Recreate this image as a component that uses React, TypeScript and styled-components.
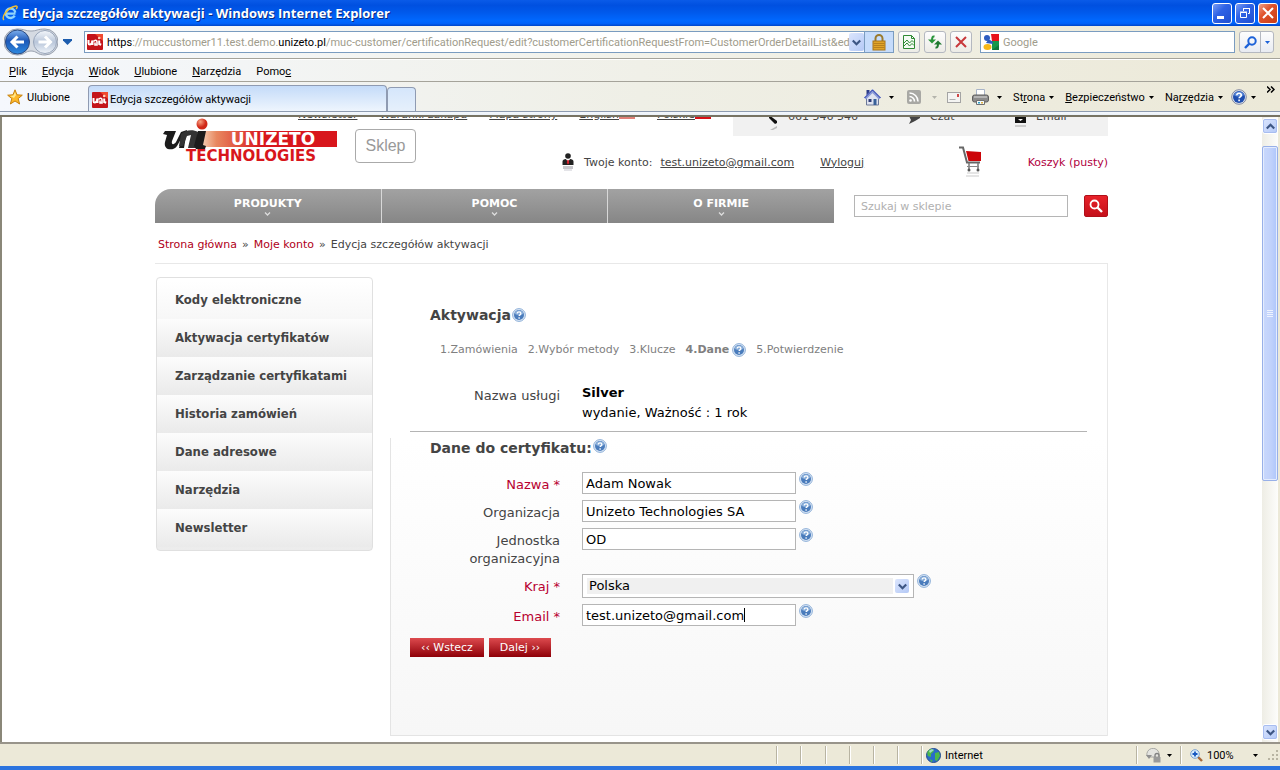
import React from "react";
import styled, { createGlobalStyle, css } from "styled-components";

const ui = `Roboto, "Noto Sans", sans-serif`;
const web = `"DejaVu Sans", Verdana, sans-serif`;

const Global = createGlobalStyle`
  *, *::before, *::after { box-sizing: border-box; }
  body { margin: 0; overflow: hidden; background: #fff; }
  button, input, select { font: inherit; margin: 0; padding: 0; border: 0; background: none; color: inherit; }
  button { cursor: pointer; }
  svg { display: block; flex: none; }
`;

const Frame = styled.div`
  display: flex;
  flex-direction: column;
  height: 100vh;
  font: 11px/14px ${ui};
  color: #000;
  background: #ece9d8;
  border-bottom: 4px solid #2b74df;
`;

/* ---------- title bar ---------- */
const TitleBar = styled.header`
  flex: none;
  display: flex;
  align-items: center;
  height: 26px;
  padding: 0 2px;
  background: linear-gradient(#0a5be8 0, #0050e0 20%, #0058ea 45%, #0068ff 80%, #0062fa 90%, #0046c8 100%);
`;
const Title = styled.h1`
  flex: 1;
  margin: 0 0 0 4px;
  font: bold 13px/18px "Open Sans", sans-serif;
  color: #fff;
  text-shadow: 1px 1px 0 #0a2a80;
`;
const WindowButtons = styled.div`
  display: flex;
  gap: 3px;
`;
const WindowButton = styled.button<{ $close?: boolean }>`
  display: grid;
  place-items: center;
  width: 20px;
  height: 21px;
  border: 1px solid #fff;
  border-radius: 3px;
  background: ${(p) =>
    p.$close
      ? "linear-gradient(135deg, #f0a088, #e0532c 40%, #c83c14)"
      : "linear-gradient(135deg, #7a9cf4, #2f63e6 40%, #1f4fd0)"};
`;

/* ---------- toolbars ---------- */
const AddressBar = styled.div`
  flex: none;
  display: flex;
  align-items: center;
  height: 33px;
  padding: 0 6px 0 4px;
  background: linear-gradient(90deg, #f5f8fd, #f2f2ea 50%, #ece9d8);
  border-bottom: 1px solid #a5a39a;
`;
const NavRound = styled.button`
  display: flex;
`;
const HistoryButton = styled.button`
  margin: 0 12px 0 5px;
`;
const UrlBox = styled.div`
  flex: 1;
  min-width: 0;
  display: flex;
  align-items: center;
  height: 22px;
  padding-left: 2px;
  background: #fff;
  border: 1px solid #7a9cc0;
`;
const Url = styled.div`
  flex: 1;
  min-width: 0;
  margin-left: 4px;
  padding-top: 2px;
  overflow: hidden;
  white-space: nowrap;
  color: #a09c8c;
  b { font-weight: normal; color: #000; }
`;
const ComboArrow = styled.span`
  display: grid;
  place-items: center;
  width: 15px;
  height: 18px;
  border-radius: 2px;
  background: linear-gradient(135deg, #dbe5fd, #b4c9f6);
`;
const LockCell = styled.div`
  display: grid;
  place-items: center;
  width: 30px;
  height: 22px;
  margin-left: -1px;
  background: #c6dcfb;
  border: 1px solid #7a9cc0;
`;
const ToolButton = styled.button`
  display: grid;
  place-items: center;
  width: 22px;
  height: 22px;
  margin-left: 4px;
  border: 1px solid #b4b8c0;
  border-radius: 3px;
  background: linear-gradient(#fdfdfd, #ecebe6);
`;
const SearchBox = styled.label`
  display: flex;
  align-items: center;
  gap: 4px;
  width: 255px;
  height: 22px;
  margin: 0 4px 0 8px;
  padding-left: 2px;
  background: #fff;
  border: 1px solid #7a9cc0;
  input {
    flex: 1;
    min-width: 0;
    padding-top: 2px;
    outline: 0;
  }
  input::placeholder { color: #a09c8c; opacity: 1; }
`;
const SplitButton = styled.div`
  display: flex;
  height: 22px;
  border: 1px solid #b4b8c0;
  border-radius: 3px;
  background: linear-gradient(#fdfdfd, #e8ebf2);
  button { display: grid; place-items: center; width: 20px; }
  button + button { width: 13px; border-left: 1px solid #b4b8c0; }
`;
const MenuBar = styled.nav`
  flex: none;
  display: flex;
  align-items: center;
  gap: 15px;
  height: 23px;
  padding: 2px 0 0 9px;
  background: linear-gradient(90deg, #f5f8fd, #f0f0e8 50%, #ece9d8);
  border-bottom: 1px solid #a5a39a;
  border-top: 1px solid #fff;
`;
const TabBar = styled.div`
  flex: none;
  display: flex;
  align-items: flex-end;
  height: 30px;
  padding: 0 9px 0 7px;
  background: linear-gradient(90deg, #f5f8fd, #efefe6 50%, #ece9d8);
  border-bottom: 1px solid #8d9bb0;
`;
const Favorites = styled.button`
  display: flex;
  align-items: center;
  gap: 4px;
  width: 81px;
  height: 28px;
  span { padding-top: 2px; }
`;
const Tab = styled.button<{ $blank?: boolean }>`
  display: flex;
  align-items: center;
  gap: 2px;
  height: 26px;
  padding: 2px 3px 0;
  border: 1px solid #8f9bb2;
  border-bottom: 0;
  border-radius: 4px 4px 0 0;
  white-space: nowrap;
  ${(p) =>
    p.$blank
      ? css`width: 29px; height: 24px; background: linear-gradient(#d5e6fb, #e6f0fb);`
      : css`width: 299px; background: linear-gradient(#c4dbf9, #eef5fd);`}
`;
const Commands = styled.div`
  flex: 1;
  display: flex;
  justify-content: flex-end;
  align-items: center;
  height: 28px;
`;
const Command = styled.button<{ $gap: number }>`
  display: flex;
  align-items: center;
  gap: 4px;
  margin-left: ${(p) => p.$gap}px;
  white-space: nowrap;
  span { padding-top: 2px; }
`;
const Chevrons = styled.span`
  align-self: flex-start;
  width: 8px;
  margin: 4px -4px 0 11px;
`;
const TabEdge = styled.div`
  flex: none;
  height: 5px;
  background: linear-gradient(#f4f8fd, #eaf1f9);
  border-bottom: 2px solid #777363;
`;

/* ---------- viewport ---------- */
const Viewport = styled.div`
  flex: 1;
  min-height: 0;
  display: flex;
  background: #fff;
  border-left: 2px solid #8a8778;
  border-right: 2px solid #ece9d8;
`;
const Page = styled.main`
  flex: 1;
  min-width: 0;
  padding-right: 1px;
  overflow: hidden;
  font: 11px/14px ${web};
  color: #444;
`;
const Container = styled.div`
  max-width: 953px;
  margin: 0 auto;
`;
const ScrollBar = styled.div`
  flex: none;
  display: flex;
  flex-direction: column;
  width: 16px;
  padding: 1px 0 2px;
  background: linear-gradient(90deg, #eeede5, #fdfdfb);
`;
const ScrollButton = styled.button`
  display: grid;
  place-items: center;
  width: 16px;
  height: 16px;
  border: 1px solid #fff;
  outline: 1px solid #a8bdf0;
  outline-offset: -2px;
  border-radius: 3px;
  background: linear-gradient(135deg, #dbe5fd, #b4c9f8);
`;
const Track = styled.div`
  flex: 1;
  display: flex;
  flex-direction: column;
  padding-top: 12px;
`;
const Thumb = styled.div`
  display: grid;
  place-items: center;
  height: 58%;
  border: 1px solid #98b0e8;
  border-radius: 2px;
  background: linear-gradient(90deg, #c9d8fc, #c0d1fb 60%, #aec6fb);
  box-shadow: inset 0 0 0 1px #e4ecfe;
`;

/* ---------- shop header ---------- */
const ShopHeader = styled.div`
  display: grid;
  grid-template:
    "links links contacts" 5px
    "logo . contacts" 14px
    "logo account account" 53px / 403px 175px 1fr;
`;
const TopLinks = styled.nav`
  grid-area: links;
  display: flex;
  align-items: flex-end;
  gap: 22px;
  padding-left: 143px;
  a { display: flex; color: #444; white-space: nowrap; }
`;
const Flag = styled.i<{ $color: string }>`
  width: 16px;
  height: 11px;
  background: ${(p) => p.$color};
`;
const Contacts = styled.div`
  grid-area: contacts;
  display: flex;
  align-items: flex-start;
  background: #f1f1f1;
`;
const Contact = styled.span<{ $width: number }>`
  display: flex;
  gap: 10px;
  width: ${(p) => p.$width}px;
  height: 14px;
  margin-top: -7px;
`;
const Brand = styled.div`
  grid-area: logo;
  display: flex;
  align-items: flex-start;
  padding-left: 9px;
  svg { overflow: visible; }
`;
const ShopBadge = styled.a`
  display: grid;
  place-items: center;
  width: 61px;
  height: 34px;
  margin: 7px 0 0 17px;
  border: 1px solid #aaa;
  border-radius: 4px;
  font: 16px/20px "Liberation Sans", sans-serif;
  color: #999;
  text-decoration: none;
`;
const Account = styled.div`
  grid-area: account;
  display: flex;
  align-items: center;
  white-space: nowrap;
  padding-left: 4px;
`;
const AccountText = styled.div`
  flex: 1;
  display: flex;
  margin-left: 10px;
  a { margin-left: 8px; color: #444; }
  a + a { margin-left: 26px; }
`;
const CartLink = styled.a`
  margin-left: 46px;
  color: #b00040;
  text-decoration: none;
`;
const NavRow = styled.div`
  display: flex;
  align-items: center;
  height: 34px;
`;
const MainNav = styled.nav`
  flex: 1;
  display: flex;
  height: 34px;
  border-radius: 16px 0 0 0;
  overflow: hidden;
  background: linear-gradient(#a2a2a2, #868686);
`;
const NavItem = styled.a`
  flex: 1;
  display: flex;
  flex-direction: column;
  align-items: center;
  padding-top: 8px;
  font-weight: bold;
  color: #fff;
  text-decoration: none;
  & + & { border-left: 1px solid #d8d8d8; }
  svg { margin-top: 1px; }
`;
const ShopSearch = styled.form`
  display: flex;
  gap: 16px;
  margin-left: 20px;
  input {
    width: 214px;
    height: 22px;
    padding: 0 6px;
    border: 1px solid #b5b5b5;
    background: #fff;
    outline: 0;
  }
  input::placeholder { color: #b0b0b0; opacity: 1; }
  button {
    display: grid;
    place-items: center;
    width: 24px;
    height: 22px;
    border: 1px solid #b0101a;
    border-radius: 2px;
    background: linear-gradient(#e8222a, #c4101a);
  }
`;
const Crumbs = styled.nav`
  display: flex;
  gap: 5px;
  height: 40px;
  padding: 15px 0 0 3px;
  a { color: #b00020; text-decoration: none; }
`;

/* ---------- body ---------- */
const Body = styled.div`
  display: flex;
  align-items: flex-start;
  border: solid #e8e8e8;
  border-width: 1px 1px 0 0;
`;
const SideNav = styled.ul`
  width: 217px;
  margin: 13px 17px 0 1px;
  padding: 3px 0;
  list-style: none;
  border: 1px solid #e0e0e0;
  border-radius: 4px;
  background: linear-gradient(#fff 50%, #ececec);
`;
const SideItem = styled.li`
  a {
    display: block;
    padding: 0 18px;
    font: bold 13px/38px "DejaVu Sans Condensed", ${web};
    color: #444;
    text-decoration: none;
    white-space: nowrap;
    background: linear-gradient(#fcfcfc, #eaeaea);
  }
  &:first-child a { background: linear-gradient(#fff, #f7f7f7); }
`;
const Panel = styled.section`
  flex: 1;
  display: flex;
  flex-direction: column;
  min-height: 472px;
  padding: 41px 20px 0 19px;
  border: solid;
  border-width: 0 0 1px 1px;
  border-image: linear-gradient(transparent 37%, #e4e4e4 37%) 1;
  background: linear-gradient(#fff 37%, #f7f7f7);
  font-size: 13px;
  line-height: 18px;
`;
const Heading = styled.h2`
  display: flex;
  gap: 1px;
  margin: 0;
  padding-left: 20px;
  font: bold 14px/20px ${web};
  color: #444;
  svg { margin-top: 3px; }
`;
const SubHeading = styled(Heading).attrs({ as: "h3" })`
  margin: 6px 0 14px;
  svg { margin-top: 1px; }
`;
const Steps = styled.ol`
  display: flex;
  align-items: center;
  gap: 10px;
  margin: 16px 0 0;
  padding: 0 0 0 30px;
  list-style: none;
  font-size: 11px;
  color: #808080;
`;
const Step = styled.li<{ $current?: boolean }>`
  display: flex;
  align-items: center;
  gap: 3px;
  font-weight: ${(p) => (p.$current ? "bold" : "normal")};
`;
const Service = styled.div`
  display: flex;
  gap: 22px;
  height: 49px;
  margin-top: 24px;
  border-bottom: 1px solid #b4b4b4;
  > span { width: 150px; padding-top: 4px; text-align: right; }
`;
const ServiceValue = styled.div`
  line-height: 20px;
  color: #000;
  b { display: block; }
`;
const Fields = styled.form`
  display: flex;
  flex-direction: column;
`;
const Field = styled.div`
  display: flex;
  align-items: flex-start;
  gap: 3px;
  margin-bottom: 6px;
`;
const FieldLabel = styled.label<{ $required?: boolean }>`
  width: 150px;
  margin-right: 19px;
  padding-top: 4px;
  text-align: right;
  color: ${(p) => (p.$required ? "#b80030" : "#444")};
`;
const TextWrap = styled.div`
  position: relative;
`;
const Text = styled.input`
  display: block;
  width: 214px;
  height: 22px;
  padding: 0 3px;
  border: 1px solid #b5b5b5;
  background: #fff;
  color: #000;
  outline: 0;
`;
const Caret = styled.span`
  position: absolute;
  top: 4px;
  left: 162px;
  width: 1px;
  height: 14px;
  background: #000;
`;
const SelectWrap = styled.div`
  display: flex;
  align-items: center;
  width: 332px;
  height: 24px;
  padding: 4px;
  border: 1px solid #b5b5b5;
  background: #fff;
  select {
    flex: 1;
    height: 16px;
    padding-left: 2px;
    appearance: none;
    background: #f0f0f0;
    color: #000;
    line-height: 16px;
    outline: 0;
  }
  span { width: 14px; height: 14px; margin-left: 2px; }
`;
const Actions = styled.div`
  display: flex;
  gap: 5px;
  margin-top: 6px;
`;
const Action = styled.button`
  height: 19px;
  padding: 0 11px;
  font-size: 11px;
  line-height: 19px;
  color: #fff;
  background: linear-gradient(#dd4a4e, #8e0008);
`;

/* ---------- status bar ---------- */
const StatusBar = styled.footer`
  flex: none;
  display: flex;
  justify-content: flex-end;
  align-items: center;
  height: 24px;
  border-top: 2px solid #98948a;
  background: #ece9d8;
`;
const Cell = styled.div<{ $width: number; $menu?: boolean }>`
  display: flex;
  align-items: center;
  gap: 4px;
  width: ${(p) => p.$width}px;
  height: 18px;
  padding: ${(p) => (p.$menu ? "0 8px 0 9px" : "0 0 0 4px")};
  border-left: 1px solid #b8b4a2;
  box-shadow: inset 1px 0 0 #fff;
  span { padding-top: 2px; }
  ${(p) => p.$menu && css`svg:last-child { margin-left: auto; }`}
`;

/* ---------- icons ---------- */
const Down = ({ color = "#000" }: { color?: string }) => (
  <svg width="5" height="3"><path d="M0 0h5L2.500 3z" fill={color} /></svg>
);
const Chevron = ({ up }: { up?: boolean }) => (
  <svg width="9" height="7" viewBox="0 0 9 7" fill="none" stroke="#3d5684" strokeWidth="2.200">
    <path d={up ? "M.8 5.500 4.500 1.800l3.700 3.700" : "M.8 1.500l3.700 3.700 3.700-3.700"} />
  </svg>
);
const Help = () => (
  <svg width="14" height="14" viewBox="0 0 14 14" role="img" aria-label="Pomoc">
    <circle cx="7" cy="7" r="6.400" fill="#dbe7f5" stroke="#8fb0d8" />
    <circle cx="7" cy="7" r="5" fill="#4a7cbc" />
    <path d="M2.600 5.500a4.600 4.600 0 0 1 8.800 0c-2 2-6.800 2-8.800 0" fill="#86acd9" />
    <path d="M5.200 5.600c0-2.200 3.700-2.200 3.700 0 0 1.300-1.800 1.200-1.800 2.500M7.100 9.300v1.400" fill="none" stroke="#fff" strokeWidth="1.300" />
  </svg>
);
const CommandHelp = () => (
  <svg width="16" height="16" viewBox="0 0 16 16">
    <circle cx="8" cy="8" r="7.300" fill="#e4e8f0" stroke="#8088a0" />
    <circle cx="8" cy="8" r="6" fill="#1f4fb0" />
    <path d="M3 6a5.500 5.500 0 0 1 10 0c-2 2-8 2-10 0" fill="#5c8ad8" />
    <path d="M5.800 6.300c0-2.800 4.500-2.800 4.500 0 0 1.500-2.200 1.500-2.200 3M8.100 10.600v1.700" fill="none" stroke="#fff" strokeWidth="1.600" />
  </svg>
);
const SiteIcon = () => (
  <svg width="16" height="16" viewBox="0 0 16 16">
    <rect width="16" height="16" rx="1" fill="#c4141a" />
    <path d="M8 0h8v7z" fill="#f04a30" />
    <path d="M1.500 6v3c0 2 2.500 2 3.200 0l.8-2.500V11" fill="none" stroke="#fff" strokeWidth="2" />
    <path d="M6.500 7.500C8 5.500 10 6 10 8v3H8V8.500" fill="none" stroke="#fff" strokeWidth="1.600" />
    <path d="M12.200 6.500V10l2 .8" fill="none" stroke="#fff" strokeWidth="2" />
    <circle cx="12.200" cy="4" r="1.300" fill="#ffd0b8" />
  </svg>
);
const IeIcon = () => (
  <svg width="16" height="16" viewBox="0 0 16 16">
    <path d="M13.500 8.600H4.800M13.300 7.500a4.800 4.800 0 1 0-.6 3.200" fill="none" stroke="#8fd4fb" strokeWidth="2.400" />
    <path d="M2 15C-1 12 6 2 14 1c2 0 1 2 0 3" fill="none" stroke="#f4c030" strokeWidth="1.400" />
  </svg>
);
const BackForward = () => (
  <svg width="54" height="28" viewBox="0 0 54 28">
    <defs>
      <linearGradient id="bk" x2="0" y2="1"><stop stopColor="#7fb0ee" /><stop offset=".45" stopColor="#1d58b8" /><stop offset="1" stopColor="#2e8ae0" /></linearGradient>
      <linearGradient id="fw" x2="0" y2="1"><stop stopColor="#f4f7fb" /><stop offset=".5" stopColor="#b9c6da" /><stop offset="1" stopColor="#eef3f9" /></linearGradient>
    </defs>
    <path d="M13 1c8 0 8 2 14 2s6-2 14-2a13 13 0 0 1 0 26c-8 0-8-4-14-4s-6 4-14 4A13 13 0 0 1 13 1" fill="#d5dae2" stroke="#9aa2b0" />
    <circle cx="13.500" cy="14" r="12" fill="url(#bk)" stroke="#2c4a80" />
    <circle cx="41" cy="14" r="11.500" fill="url(#fw)" stroke="#98a5ba" />
    <path d="M20 14H9M13.500 8.500 8 14l5.500 5.500M34.500 14h11M41 8.500l5.500 5.500-5.500 5.500" fill="none" stroke="#fff" strokeWidth="3" />
  </svg>
);
const Star = () => (
  <svg width="16" height="16" viewBox="0 0 16 16">
    <path d="m8 .8 2 5 5.300.4-4.100 3.400 1.400 5.400L8 12l-4.600 3 1.400-5.400L.7 6.200 6 5.800z" fill="#fdb92c" stroke="#c8820e" />
    <path d="m8 3 1 3-2 3-4-2 3.500-.5z" fill="#ffe890" />
  </svg>
);
const Lock = () => (
  <svg width="14" height="17" viewBox="0 0 14 17">
    <path d="M3.500 8V4.500a3.500 3.500 0 0 1 7 0V8" fill="none" stroke="#9a7a2c" strokeWidth="2" />
    <rect x="1" y="7" width="12" height="9" fill="#e0a428" stroke="#a8741a" />
    <path d="M1.500 9.500h11M1.500 11.500h11M1.500 13.500h11" stroke="#b9801c" />
  </svg>
);
const BrokenPage = () => (
  <svg width="12" height="14" viewBox="0 0 12 14" fill="none" stroke="#2f8a34">
    <path d="M.5.500h8l3 3v10H.5zM8.500.5v3h3" fill="#f4fbf4" />
    <path d="m1 8 3-3 2.500 3L9 5.500l2 2M1 11l3-3 2.500 3L9 8.500l2 2" />
  </svg>
);
const Refresh = () => (
  <svg width="14" height="14" viewBox="0 0 14 14">
    <path d="M6.500 1.500C4.500 1 4 2.500 4 6" fill="none" stroke="#28943a" strokeWidth="2" />
    <path d="M0 4.500h8L4 8.500z" fill="#28943a" />
    <path d="M7.500 12.500C9.500 13 10 11.500 10 8" fill="none" stroke="#1f7a30" strokeWidth="2" />
    <path d="M6 9.500h8l-4-4z" fill="#1f7a30" />
  </svg>
);
const Stop = () => (
  <svg width="12" height="12" viewBox="0 0 12 12" stroke="#c8383c" strokeWidth="2"><path d="m1 1 10 10M11 1 1 11" /></svg>
);
const SearchLogo = () => (
  <svg width="16" height="16" viewBox="0 0 16 16">
    <path d="M8 0h8v7H9z" fill="#e8141c" /><path d="M9 7h7v9H9z" fill="#18984a" />
    <path d="M9 16h7v-5z" fill="#107a3a" />
    <circle cx="4" cy="4" r="3" fill="#2c5cc0" /><path d="M5 6c4 0 5 2 5 4L3 9z" fill="#2c5cc0" />
    <ellipse cx="4.500" cy="13" rx="4" ry="3" fill="#f8b818" />
  </svg>
);
const Magnifier = () => (
  <svg width="13" height="13" viewBox="0 0 13 13" fill="none" stroke="#1d62d8">
    <circle cx="8" cy="5" r="3.700" strokeWidth="2" /><path d="M5.300 7.700 1 12" strokeWidth="2.400" />
  </svg>
);
const Home = () => (
  <svg width="17" height="17" viewBox="0 0 17 17">
    <path d="M2.500 8v8h12V8L8.500 3z" fill="#dfe3f0" stroke="#6c7898" />
    <path d="M2.500 1h3v5h-3z" fill="#2c3c88" />
    <path d="M1 9.500 8.500 2 16 9.500" fill="none" stroke="#8c9cd8" strokeWidth="3" />
    <path d="M.5 9 8.500 1l8 8" fill="none" stroke="#2838a8" />
    <path d="M4.500 10h3v3h-3z" fill="#303e78" /><path d="M9.500 10h3v6h-3z" fill="#386098" />
  </svg>
);
const Feed = () => (
  <svg width="14" height="14" viewBox="0 0 14 14">
    <rect width="14" height="14" rx="2" fill="#a8a8a4" />
    <g fill="none" stroke="#fff" strokeWidth="1.600"><path d="M2.500 6.500a5 5 0 0 1 5 5M2.500 3a8.500 8.500 0 0 1 8.500 8.500" /></g>
    <circle cx="3.500" cy="10.500" r="1.300" fill="#fff" />
  </svg>
);
const Mail = () => (
  <svg width="14" height="11" viewBox="0 0 14 11">
    <rect x=".5" y=".5" width="13" height="10" fill="#f4f4f2" stroke="#a4a4a4" />
    <path d="M10 2h2v3h-2z" fill="#d04848" /><path d="M2.500 7.500h6" stroke="#b0b0b0" />
  </svg>
);
const Printer = () => (
  <svg width="17" height="16" viewBox="0 0 17 16">
    <path d="M4.500.5h8v6h-8z" fill="#fff" stroke="#a8b4c8" />
    <rect x=".5" y="6" width="16" height="7" rx="2" fill="#8c8c8c" stroke="#5e5e5e" /><path d="M2 7h13v2H2z" fill="#b4b4b4" />
    <path d="M4.500 11.500h8v4h-8z" fill="#f4fafc" stroke="#707070" /><path d="M6 13h2v1.500H6z" fill="#30a0c8" /><path d="M9 13h2v1.500H9z" fill="#e0b040" />
  </svg>
);
const Globe = () => (
  <svg width="15" height="15" viewBox="0 0 15 15">
    <circle cx="7.500" cy="7.500" r="7" fill="#2a6cc8" stroke="#234c8c" />
    <path d="M2 3c3-3 5-2 6 0L5 6v3L2 8C1 6 1 4 2 3M9 5l4-1 1 4-3 5-2-1zM4 11l3 2-2 1z" fill="#4cb848" />
    <path d="M3 3c2-2 4-2 5-1L4 5z" fill="#c8ecf8" opacity=".7" />
  </svg>
);
const Protect = () => (
  <svg width="16" height="15" viewBox="0 0 16 15">
    <path d="M1 8A6 6 0 0 1 13 5v4H5z" fill="#e4e4e0" stroke="#a8a8a4" /><path d="M0 7h6L3 11z" fill="#909090" />
    <path d="M9 9V7.500a2 2 0 0 1 4 0V9" fill="none" stroke="#808080" strokeWidth="1.300" /><path d="M7.500 9h7v5.500h-7z" fill="#9a9a9a" />
  </svg>
);
const Zoom = () => (
  <svg width="13" height="13" viewBox="0 0 13 13">
    <path d="m8 8 4 4" stroke="#a86838" strokeWidth="2.400" />
    <circle cx="5" cy="5" r="4.300" fill="#dceefc" stroke="#78a0d0" /><path d="M5 2.500v5M2.500 5h5" stroke="#1858c0" strokeWidth="1.800" />
  </svg>
);
const Grip = () => (
  <svg width="14" height="14" fill="#b8b4a2">
    <path d="M10 2h2v2h-2zM10 6h2v2h-2zM10 10h2v2h-2zM6 6h2v2H6zM6 10h2v2H6zM2 10h2v2H2z" />
  </svg>
);
const Person = () => (
  <svg width="12" height="20" viewBox="0 0 12 20">
    <circle cx="6" cy="3" r="2.800" fill="#222" />
    <path d="M.5 12V8.500C.5 7 2 6.200 4 6l2 3 2-3c2 .2 3.500 1 3.500 2.500V12z" fill="#222" /><path d="m4.500 6 1.500 3 1.500-3z" fill="#fff" /><path d="M5.300 7h1.400l.5 3L6 11.500 4.800 10z" fill="#d8202c" />
    <path d="M1 13h10v3H1z" fill="#c8c8cc" /><path d="M2 16h8v2H2z" fill="#e4e4e8" />
  </svg>
);
const Cart = () => (
  <svg width="23" height="34" viewBox="0 0 23 34">
    <path d="M0 1.500h4l4 15h13" fill="none" stroke="#666" strokeWidth="2" />
    <path d="M7 5 22 6v9H9.500z" fill="#cc0408" />
    <path d="M10 17v6.500M19 17v6.500" stroke="#777" strokeDasharray="3 1" strokeWidth="1.500" /><path d="M8 20.500h12" stroke="#888" />
    <circle cx="10" cy="24" r="1.500" fill="#555" /><circle cx="19" cy="24" r="1.500" fill="#555" />
    <path d="M8 27h12M7 30h13" stroke="#ddd" strokeWidth="1.500" />
  </svg>
);
const LogoText = styled.text<{ $light?: boolean }>`
  font: bold ${(p) => (p.$light ? 17 : 15)}px/1 "DejaVu Sans", sans-serif;
  text-anchor: middle;
  fill: ${(p) => (p.$light ? "#fff" : "#d8161c")};
`;
const Logo = () => (
  <svg width="174" height="40" viewBox="0 1 174 40" role="img" aria-label="Unizeto Technologies">
    <defs>
      <linearGradient id="band"><stop offset="0" stopColor="#f6d8c0" /><stop offset=".12" stopColor="#e88860" /><stop offset=".45" stopColor="#d8161c" /></linearGradient>
      <radialGradient id="ball" cx=".35" cy=".3"><stop stopColor="#f8a080" /><stop offset="1" stopColor="#d02818" /></radialGradient>
    </defs>
    <path d="M40 10h133v16H36z" fill="url(#band)" />
    <path d="M1 10h11L8 20c-1 4 2 4 4 1l5-10 6-2-3 18h-5l2-9-4 7c-3 5-14 5-12-4l2-7-4-1z" fill="#1c1c1c" />
    <path d="M17 13c4-4 12-5 17-2l-2 16h-8l3-13-4 1-4 10h-4z" fill="#333" />
    <path d="M34 10h8l-3 14 3 1-1 3h-9l-2-3z" fill="#1c1c1c" />
    <circle cx="38" cy="3" r="5.500" fill="url(#ball)" />
    <LogoText x="109" y="24" $light>UNIZETO</LogoText>
    <LogoText x="87" y="40">TECHNOLOGIES</LogoText>
  </svg>
);
const PhoneIcon = () => (
  <svg width="45" height="20" viewBox="0 0 45 20" overflow="visible"><path d="m36 5 8 6v2l-2 1-6-6z" fill="#111" /><path d="m37 20 7-4v2l-4 2z" fill="#bbb" /></svg>
);
const ChatIcon = () => (
  <svg width="48" height="20" viewBox="0 0 48 20" overflow="visible"><path d="M36 4h12v4l-5 3-6 3 2-4z" fill="#444" /></svg>
);
const EmailIcon = () => (
  <svg width="50" height="20" viewBox="0 0 50 20" overflow="visible"><path d="M39 5h11v8H39z" fill="#111" /><path d="m42 9 2.500 2L47 9z" fill="#fff" /><path d="M39 15h11v2H39z" fill="#ccc" /></svg>
);

/* ---------- data ---------- */
const menu: [string, string, string][] = [
  ["", "P", "lik"], ["", "E", "dycja"], ["", "W", "idok"], ["", "U", "lubione"], ["", "N", "arzędzia"], ["Pomo", "c", ""],
];
const sideItems = [
  "Kody elektroniczne", "Aktywacja certyfikatów", "Zarządzanie certyfikatami", "Historia zamówień", "Dane adresowe", "Narzędzia", "Newsletter",
];

const TextField = ({ id, label, value, required, caret }: { id: string; label: string; value: string; required?: boolean; caret?: boolean }) => (
  <Field>
    <FieldLabel htmlFor={id} $required={required}>{label}{required && " *"}</FieldLabel>
    <TextWrap>
      <Text id={id} defaultValue={value} />
      {caret && <Caret />}
    </TextWrap>
    <Help />
  </Field>
);

export default function App() {
  return (
    <Frame>
      <Global />
      <TitleBar>
        <IeIcon />
        <Title>Edycja szczegółów aktywacji - Windows Internet Explorer</Title>
        <WindowButtons>
          <WindowButton aria-label="Minimalizuj"><svg width="12" height="12"><path d="M1 9h7v3H1z" fill="#fff" /></svg></WindowButton>
          <WindowButton aria-label="Przywróć">
            <svg width="12" height="12" fill="none" stroke="#fff"><path d="M1.500 5.500h6v5h-6zM1 5h7M4.500 4V1.500h6v5H9M4 1.500h7" /></svg>
          </WindowButton>
          <WindowButton $close aria-label="Zamknij"><svg width="12" height="12" stroke="#fff" strokeWidth="2"><path d="m1 1 10 10M11 1 1 11" /></svg></WindowButton>
        </WindowButtons>
      </TitleBar>

      <AddressBar>
        <NavRound aria-label="Wstecz i dalej"><BackForward /></NavRound>
        <HistoryButton aria-label="Ostatnie strony"><svg width="9" height="6"><path d="M0 0h9v1.500L4.500 6 0 1.500z" fill="#1c5cae" /></svg></HistoryButton>
        <UrlBox>
          <SiteIcon />
          <Url><b>https</b>://muccustomer11.test.demo.<b>unizeto.pl</b>/muc-customer/certificationRequest/edit?customerCertificationRequestFrom=CustomerOrderDetailList&amp;edite</Url>
          <ComboArrow><Chevron /></ComboArrow>
        </UrlBox>
        <LockCell><Lock /></LockCell>
        <ToolButton aria-label="Widok zgodności"><BrokenPage /></ToolButton>
        <ToolButton aria-label="Odśwież"><Refresh /></ToolButton>
        <ToolButton aria-label="Zatrzymaj"><Stop /></ToolButton>
        <SearchBox><SearchLogo /><input placeholder="Google" /></SearchBox>
        <SplitButton>
          <button aria-label="Szukaj"><Magnifier /></button>
          <button aria-label="Opcje wyszukiwania"><Down color="#1d62d8" /></button>
        </SplitButton>
      </AddressBar>

      <MenuBar>
        {menu.map(([a, key, b]) => <span key={a + key + b}>{a}<u>{key}</u>{b}</span>)}
      </MenuBar>

      <TabBar>
        <Favorites><Star /><span>Ulubione</span></Favorites>
        <Tab><SiteIcon />Edycja szczegółów aktywacji</Tab>
        <Tab $blank aria-label="Nowa karta" />
        <Commands>
          <Command $gap={0} aria-label="Strona główna"><Home /></Command>
          <Command $gap={8} aria-label="Menu strony głównej"><Down /></Command>
          <Command $gap={13} aria-label="Kanały"><Feed /></Command>
          <Command $gap={11} aria-label="Menu kanałów"><Down color="#b4b4ac" /></Command>
          <Command $gap={10} aria-label="Poczta"><Mail /></Command>
          <Command $gap={11} aria-label="Drukuj"><Printer /></Command>
          <Command $gap={8} aria-label="Menu drukowania"><Down /></Command>
          <Command $gap={11}><span>St<u>r</u>ona</span><Down /></Command>
          <Command $gap={11}><span><u>B</u>ezpieczeństwo</span><Down /></Command>
          <Command $gap={11}><span>Na<u>r</u>zędzia</span><Down /></Command>
          <Command $gap={8} aria-label="Pomoc"><CommandHelp /><Down /></Command>
        </Commands>
        <Chevrons><svg width="8" height="7" fill="none" stroke="#000" strokeWidth="1.500"><path d="m0 .5 3 3-3 3M4 .5l3 3-3 3" /></svg></Chevrons>
      </TabBar>
      <TabEdge />

      <Viewport>
        <Page>
          <Container>
            <ShopHeader>
              <TopLinks>
                <a href="#newsletter">Newsletter</a>
                <a href="#warunki">Warunki zakupu</a>
                <a href="#mapa">Mapa strony</a>
                <a href="#en">English<Flag $color="#e08078" /></a>
                <a href="#pl">Polskie<Flag $color="#d81018" /></a>
              </TopLinks>
              <Contacts>
                <Contact $width={139}><PhoneIcon />661 546 546</Contact>
                <Contact $width={104}><ChatIcon />Czat</Contact>
                <Contact $width={80}><EmailIcon />Email</Contact>
              </Contacts>
              <Brand><Logo /><ShopBadge href="#sklep">Sklep</ShopBadge></Brand>
              <Account>
                <Person />
                <AccountText>Twoje konto:<a href="#konto">test.unizeto@gmail.com</a><a href="#wyloguj">Wyloguj</a></AccountText>
                <Cart />
                <CartLink href="#koszyk">Koszyk (pusty)</CartLink>
              </Account>
            </ShopHeader>
            <NavRow>
              <MainNav>
                {["PRODUKTY", "POMOC", "O FIRMIE"].map((n) => (
                  <NavItem href="#menu" key={n}>{n}<svg width="7" height="4" fill="none" stroke="#ddd" strokeWidth="1.300"><path d="m1 .5 2.500 2.500L6 .5" /></svg></NavItem>
                ))}
              </MainNav>
              <ShopSearch>
                <input placeholder="Szukaj w sklepie" aria-label="Szukaj w sklepie" />
                <button aria-label="Szukaj"><svg width="14" height="14" viewBox="0 0 14 14" fill="none" stroke="#fff"><circle cx="5.500" cy="5.500" r="4" strokeWidth="1.800" /><path d="m8.500 8.500 4.500 4.500" strokeWidth="2.400" /></svg></button>
              </ShopSearch>
            </NavRow>
            <Crumbs>
              <a href="#glowna">Strona główna</a>
              <span>»</span>
              <a href="#konto">Moje konto</a>
              <span>»</span>
              <span>Edycja szczegółów aktywacji</span>
            </Crumbs>
            <Body>
              <SideNav>
                {sideItems.map((t) => <SideItem key={t}><a href="#pozycja">{t}</a></SideItem>)}
              </SideNav>
              <Panel>
                <Heading>Aktywacja<Help /></Heading>
                <Steps>
                  <Step>1.Zamówienia</Step>
                  <Step>2.Wybór metody</Step>
                  <Step>3.Klucze</Step>
                  <Step $current>4.Dane <Help /></Step>
                  <Step>5.Potwierdzenie</Step>
                </Steps>
                <Service>
                  <span>Nazwa usługi</span>
                  <ServiceValue><b>Silver</b>wydanie, Ważność : 1 rok</ServiceValue>
                </Service>
                <SubHeading>Dane do certyfikatu:<Help /></SubHeading>
                <Fields>
                  <TextField id="nazwa" label="Nazwa" value="Adam Nowak" required />
                  <TextField id="org" label="Organizacja" value="Unizeto Technologies SA" />
                  <TextField id="jedn" label="Jednostka organizacyjna" value="OD" />
                  <Field>
                    <FieldLabel htmlFor="kraj" $required>Kraj *</FieldLabel>
                    <SelectWrap>
                      <select id="kraj"><option>Polska</option></select>
                      <ComboArrow><Chevron /></ComboArrow>
                    </SelectWrap>
                    <Help />
                  </Field>
                  <TextField id="email" label="Email" value="test.unizeto@gmail.com" required caret />
                  <Actions>
                    <Action type="button">‹‹ Wstecz</Action>
                    <Action type="button">Dalej ››</Action>
                  </Actions>
                </Fields>
              </Panel>
            </Body>
          </Container>
        </Page>
        <ScrollBar>
          <ScrollButton aria-label="W górę"><Chevron up /></ScrollButton>
          <Track>
            <Thumb><svg width="7" height="8" stroke="#eef3ff"><path d="M0 .5h6M0 2.500h6M0 4.500h6M0 6.500h6" /></svg></Thumb>
          </Track>
          <ScrollButton aria-label="W dół"><Chevron /></ScrollButton>
        </ScrollBar>
      </Viewport>

      <StatusBar>
        {[24, 25, 24, 24, 24, 24].map((w, i) => <Cell key={i} $width={w} />)}
        <Cell $width={215}><Globe /><span>Internet</span></Cell>
        <Cell $width={44} $menu><Protect /><Down /></Cell>
        <Cell $width={86} $menu><Zoom /><span>100%</span><Down /></Cell>
        <Grip />
      </StatusBar>
    </Frame>
  );
}
